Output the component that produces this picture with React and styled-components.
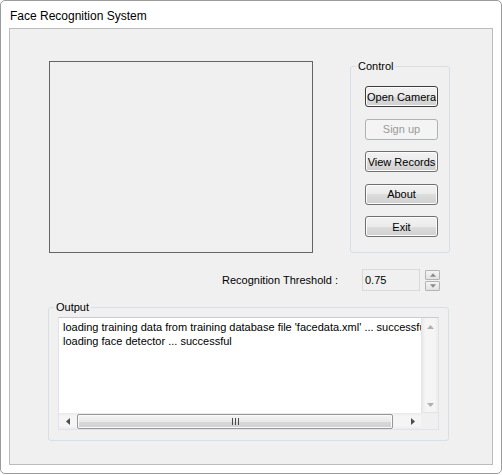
import React from 'react';
import styled, { createGlobalStyle } from 'styled-components';

const GlobalStyle = createGlobalStyle`
  html, body {
    margin: 0;
    padding: 0;
    background: #ffffff;
  }
  body {
    font-family: "Liberation Sans", Arial, sans-serif;
    font-size: 11px;
    color: #000000;
  }
`;

const Window = styled.div`
  box-sizing: border-box;
  width: 502px;
  height: 474px;
  border: 1px solid #9b9b9b;
  border-radius: 5px;
  background: #ffffff;
  padding: 0 8px 8px 8px;
  display: flex;
  flex-direction: column;
`;

const TitleBar = styled.div`
  height: 27px;
  display: flex;
  align-items: center;
  padding: 2px 0 0 1px;
  box-sizing: border-box;
  font-size: 12px;
`;

const Panel = styled.div`
  flex: 1;
  border: 1px solid #bcbcbc;
  background: #f0f0f0;
  padding: 32px 0 0 38px;
  display: flex;
  flex-direction: column;
`;

const TopRow = styled.div`
  display: flex;
  align-items: flex-start;
  gap: 37px;
`;

const VideoBox = styled.div`
  box-sizing: border-box;
  width: 264px;
  height: 192px;
  margin-left: 1px;
  border: 1px solid #646464;
`;

const Group = styled.div`
  position: relative;
  box-sizing: border-box;
  border: 1px solid #d5dfe5;
  border-radius: 3px;
  width: ${p => p.$width}px;
  height: ${p => p.$height}px;
  margin-top: ${p => p.$top || 0}px;
`;

const GroupTitle = styled.span`
  position: absolute;
  top: -8px;
  left: 5px;
  padding: 0 2px;
  line-height: 14px;
  background: #f0f0f0;
`;

const ButtonColumn = styled.div`
  display: flex;
  flex-direction: column;
  gap: 11.5px;
  padding: 19px 0 0 14px;
`;

const Button = styled.div`
  box-sizing: border-box;
  width: 73px;
  height: 21px;
  display: flex;
  align-items: center;
  justify-content: center;
  border-radius: 3px;
  border: 1px solid ${p => (p.$disabled ? '#adb2b5' : p.$focused ? '#3c3c3c' : '#707070')};
  background: ${p => (p.$disabled
    ? '#f4f4f4'
    : 'linear-gradient(#f2f2f2 0%, #ebebeb 50%, #dddddd 50%, #cfcfcf 100%)')};
  box-shadow: inset 0 0 0 1px ${p => (p.$disabled ? '#f4f4f4' : '#fcfcfc')};
  color: ${p => (p.$disabled ? '#9a9a9a' : '#000000')};
  white-space: nowrap;
`;

const ThresholdRow = styled.div`
  display: flex;
  align-items: center;
  justify-content: flex-end;
  margin: 16px 52px 0 0;
  height: 22px;
`;

const Label = styled.span`
  margin-right: 24px;
`;

const SpinInput = styled.div`
  box-sizing: border-box;
  width: 58px;
  height: 22px;
  border: 1px solid #d9d9d9;
  display: flex;
  align-items: center;
  padding-left: 2px;
`;

const SpinButtons = styled.div`
  display: flex;
  flex-direction: column;
  gap: 1px;
  margin-left: 5px;
`;

const SpinButton = styled.div`
  box-sizing: border-box;
  width: 15px;
  height: 10px;
  border: 1px solid #b4b4b4;
  border-radius: 1px;
  background: linear-gradient(#f4f4f4, #e2e2e2);
  display: flex;
  align-items: center;
  justify-content: center;
`;

const OutputGroup = styled(Group)`
  margin-top: 16px;
  padding: 9px 9px 0 9px;
`;

const TextBox = styled.div`
  box-sizing: border-box;
  width: 381px;
  height: 113px;
  border: 1px solid #e2e3ea;
  border-top-color: #c9cbd1;
  background: #ffffff;
  display: grid;
  grid-template-columns: 1fr 17px;
  grid-template-rows: 1fr 16px;
`;

const TextContent = styled.div`
  overflow: hidden;
  white-space: nowrap;
  padding: 2px 4px;
  line-height: 14px;
`;

const VScroll = styled.div`
  display: flex;
  flex-direction: column;
  justify-content: space-between;
  align-items: center;
  padding: 7px 0 5px;
  background: linear-gradient(90deg, #e9e9e9 0%, #f5f5f5 20%, #f5f5f5 80%, #ececec 100%);
  border-left: 1px solid #e4e4e4;
  border-bottom: 1px solid #e4e4e4;
`;

const HScroll = styled.div`
  display: flex;
  align-items: center;
  background: linear-gradient(#e9e9e9 0%, #f5f5f5 20%, #f5f5f5 80%, #ececec 100%);
`;

const ArrowCell = styled.div`
  width: 17px;
  height: 16px;
  display: flex;
  align-items: center;
  justify-content: center;
`;

const Track = styled.div`
  flex: 1;
  height: 16px;
  display: flex;
  align-items: center;
`;

const Thumb = styled.div`
  box-sizing: border-box;
  width: 316px;
  height: 15px;
  margin-left: 1px;
  border: 1px solid #979797;
  border-radius: 2px;
  background: linear-gradient(#f4f4f4 0%, #e9e9e9 50%, #d9d9d9 51%, #cfcfcf 100%);
  box-shadow: inset 0 0 0 1px #fafafa;
  display: flex;
  align-items: center;
  justify-content: center;
  gap: 2px;
`;

const Grip = styled.span`
  width: 1px;
  height: 7px;
  background: #4a4a4a;
`;

const Corner = styled.div`
  background: #f0f0f0;
`;

const Arrow = ({ dir, color, size = 7 }) => {
  const pts = {
    up: '0,4 3.5,0 7,4',
    down: '0,0 7,0 3.5,4',
    left: '4,0 4,7 0,3.5',
    right: '0,0 4,3.5 0,7',
  }[dir];
  const vertical = dir === 'up' || dir === 'down';
  return (
    <svg width={vertical ? size : 4} height={vertical ? 4 : size} viewBox={vertical ? '0 0 7 4' : '0 0 4 7'}>
      <polygon points={pts} fill={color} />
    </svg>
  );
};

const App = () => {
  return (
    <>
      <GlobalStyle />
      <Window>
        <TitleBar>Face Recognition System</TitleBar>
        <Panel>
          <TopRow>
            <VideoBox />
            <Group $width={100} $height={187} $top={5}>
              <GroupTitle>Control</GroupTitle>
              <ButtonColumn>
                <Button $focused>Open Camera</Button>
                <Button $disabled>Sign up</Button>
                <Button>View Records</Button>
                <Button>About</Button>
                <Button>Exit</Button>
              </ButtonColumn>
            </Group>
          </TopRow>
          <ThresholdRow>
            <Label>Recognition Threshold :</Label>
            <SpinInput>0.75</SpinInput>
            <SpinButtons>
              <SpinButton><Arrow dir="up" color="#8a8a8a" size={6} /></SpinButton>
              <SpinButton><Arrow dir="down" color="#8a8a8a" size={6} /></SpinButton>
            </SpinButtons>
          </ThresholdRow>
          <OutputGroup $width={401} $height={134}>
            <GroupTitle>Output</GroupTitle>
            <TextBox>
              <TextContent>
                loading training data from training database file 'facedata.xml' ... successful
                <br />
                loading face detector ... successful
              </TextContent>
              <VScroll>
                <Arrow dir="up" color="#b0b0b0" />
                <Arrow dir="down" color="#b0b0b0" />
              </VScroll>
              <HScroll>
                <ArrowCell><Arrow dir="left" color="#4d4d4d" /></ArrowCell>
                <Track>
                  <Thumb>
                    <Grip />
                    <Grip />
                    <Grip />
                  </Thumb>
                </Track>
                <ArrowCell><Arrow dir="right" color="#4d4d4d" /></ArrowCell>
              </HScroll>
              <Corner />
            </TextBox>
          </OutputGroup>
        </Panel>
      </Window>
    </>
  );
};

export default App;
